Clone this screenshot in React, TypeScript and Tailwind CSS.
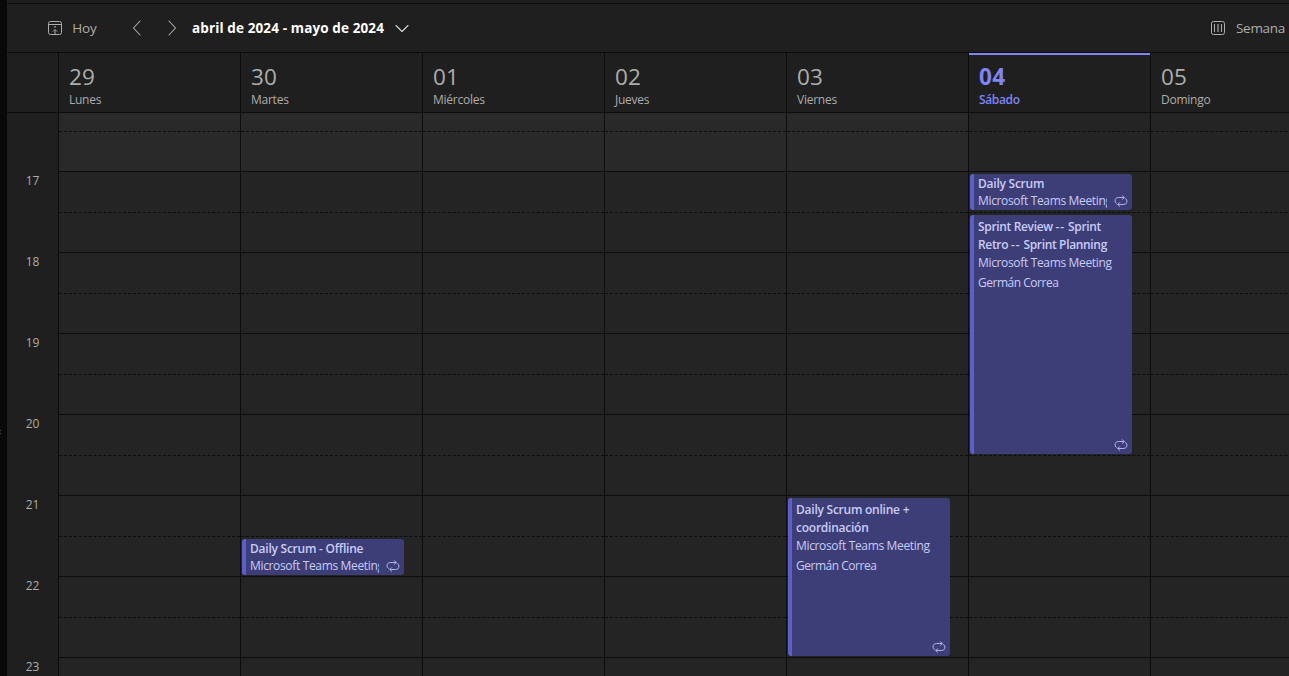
import React from "react";

type CalendarEvent = {
  title: string[];
  organizer?: string;
  place: string;
  className: string;
  compact?: boolean;
};

type Day = { number: string; name: string; today?: boolean; weekend?: boolean; events: CalendarEvent[] };

const TEAMS = "Microsoft Teams Meeting";

const days: Day[] = [
  { number: "29", name: "Lunes", events: [] },
  {
    number: "30",
    name: "Martes",
    events: [{ title: ["Daily Scrum - Offline"], place: TEAMS, compact: true, className: "top-[426px] h-9" }],
  },
  { number: "01", name: "Miércoles", events: [] },
  { number: "02", name: "Jueves", events: [] },
  {
    number: "03",
    name: "Viernes",
    events: [
      {
        title: ["Daily Scrum online +", "coordinación"],
        place: TEAMS,
        organizer: "Germán Correa",
        className: "top-[385px] h-[158px]",
      },
    ],
  },
  {
    number: "04",
    name: "Sábado",
    today: true,
    weekend: true,
    events: [
      { title: ["Daily Scrum"], place: TEAMS, compact: true, className: "top-[61px] h-9" },
      {
        title: ["Sprint Review -- Sprint", "Retro -- Sprint Planning"],
        place: TEAMS,
        organizer: "Germán Correa",
        className: "top-[102px] h-[239px]",
      },
    ],
  },
  { number: "05", name: "Domingo", weekend: true, events: [] },
];

const hours = ["17", "18", "19", "20", "21", "22", "23"];

function TodayIcon() {
  return (
    <svg className="size-4 shrink-0" viewBox="0 0 16 16" fill="none" stroke="currentColor">
      <rect x="1.5" y="1.5" width="13" height="13" rx="2" />
      <path d="M1.5 4.5h13M8 15V10M6 11.5l2-2 2 2" />
      <path d="M8 6v1.5" strokeWidth="1.4" />
    </svg>
  );
}

function WeekIcon() {
  return (
    <svg className="size-4 shrink-0" viewBox="0 0 16 16" fill="none" stroke="currentColor">
      <rect x="1.5" y="1.5" width="13" height="13" rx="2" />
      <path d="M4.5 4v8M11.5 4v8" />
      <path d="M8 4v8" strokeWidth="2" opacity="0.55" />
    </svg>
  );
}

function Chevron({ d, className }: { d: string; className: string }) {
  return (
    <svg className={className} viewBox="0 0 16 16" fill="none" stroke="currentColor" strokeWidth="1.1" strokeLinecap="round" strokeLinejoin="round">
      <path d={d} />
    </svg>
  );
}

function RepeatIcon({ className }: { className: string }) {
  return (
    <svg className={className} viewBox="0 0 14 12" fill="none" stroke="currentColor" strokeWidth="1" strokeLinecap="round" strokeLinejoin="round">
      <path d="M2.6 8.6A3.3 3.3 0 0 1 4.8 2.5H10M8.4 .7l1.8 1.8-1.8 1.8" />
      <path d="M11.4 3.4A3.3 3.3 0 0 1 9.2 9.5H4M5.6 7.7 3.8 9.5l1.8 1.8" />
    </svg>
  );
}

function EventTitle({ line }: { line: string }) {
  const [before, after] = line.split("--");
  return (
    <h3 className="whitespace-nowrap font-semibold tracking-[-0.24px]">
      {after === undefined ? (
        line
      ) : (
        <span className="tracking-[-0.34px]">
          {before}
          <span className="tracking-[1px]">--</span>
          {after}
        </span>
      )}
    </h3>
  );
}

function EventCard({ event }: { event: CalendarEvent }) {
  return (
    <article
      className={`absolute left-px w-[162px] overflow-hidden rounded-[3px] border-l-4 border-[#5b5fc7] bg-[#3d3e78] pl-1 text-xs text-[#c9ccf8] ${event.className}`}
    >
      <div className={event.compact ? "pt-px leading-[17px]" : "pt-[3px] leading-[18px]"}>
        {event.title.map((line) => (
          <EventTitle key={line} line={line} />
        ))}
        <p className={`overflow-hidden whitespace-nowrap tracking-[-0.34px] ${event.compact ? "w-[129px]" : ""}`}>{event.place}</p>
        {event.organizer && <p className="mt-0.5 tracking-[-0.48px]">{event.organizer}</p>}
      </div>
      <RepeatIcon className="absolute right-1 bottom-[3px] h-3 w-3.5 text-[#aeb2ec]" />
    </article>
  );
}

function HourLines({ weekend }: { weekend?: boolean }) {
  return (
    <div>
      <div className={weekend ? "bg-[#242424]" : "bg-[#292929]"}>
        <div className="h-[19px] border-b border-dashed border-[#0d0d0d]" />
        <div className="h-10 border-b border-[#0d0d0d]" />
      </div>
      {hours.map((hour) => (
        <div key={hour}>
          <div className="h-[41px] border-b border-dashed border-[#0d0d0d]" />
          <div className="h-10 border-b border-[#0d0d0d]" />
        </div>
      ))}
    </div>
  );
}

export default function App() {
  return (
    <div className="flex h-[676px] w-[1289px] overflow-hidden bg-[#1f1f1f] font-['Open_Sans','Noto_Sans',sans-serif] text-[#adadad]">
      <div className="flex w-[7px] shrink-0 flex-col bg-[#080808] pt-[430px]">
        <div className="h-1 w-px border-y border-[#4a4a4a]" />
      </div>
      <main className="flex min-w-0 flex-1 flex-col">
        <div className="h-1 shrink-0 border-b border-[#0d0d0d]" />
        <header className="flex h-[49px] shrink-0 items-center border-b border-[#0d0d0d] pl-10 text-sm">
          <button className="flex items-center gap-2">
            <TodayIcon />
            <span className="w-[27px] pt-0.5 text-[13.5px] tracking-[-0.1px]">Hoy</span>
          </button>
          <Chevron className="ml-[31px] size-4" d="M11 1 4.5 8l6.5 7" />
          <Chevron className="ml-[19px] size-4" d="M5 1l6.5 7L5 15" />
          <button className="ml-[12px] flex items-center gap-2.5 text-white">
            <span className="w-[192px] pt-0.5 text-left whitespace-nowrap text-[13.5px] font-bold tracking-[0.12px]">
              abril de 2024 - mayo de 2024
            </span>
            <Chevron className="size-4 text-[#d6d6d6]" d="M2 5.5l6 6 6-6" />
          </button>
          <button className="ml-auto flex items-center gap-2.5 pr-1">
            <WeekIcon />
            <span className="w-[49px] pt-0.5 text-[13.5px] tracking-[-0.3px]">Semana</span>
          </button>
        </header>
        <div className="flex h-[60px] shrink-0 border-b border-[#0d0d0d]">
          <div className="w-[51px] shrink-0" />
          {days.map((day) => (
            <div key={day.number} className="w-[182px] shrink-0 border-l border-[#0d0d0d]">
              <div className={`h-full border-t-2 pt-2 pl-2.5 ${day.today ? "border-[#7f85f5] text-[#7f85f5]" : "border-transparent"}`}>
                <div className={`mb-px text-[22.5px] leading-7 ${day.today ? "font-bold tracking-[0.3px]" : "tracking-[0.1px]"}`}>{day.number}</div>
                <div className={`text-xs leading-4 ${day.today ? "font-semibold tracking-[-0.35px]" : "tracking-[-0.25px]"}`}>{day.name}</div>
              </div>
            </div>
          ))}
        </div>
        <div className="flex min-h-0 flex-1 overflow-hidden">
          <div className="w-[51px] shrink-0 pt-[59px] text-center text-xs">
            {hours.map((hour) => (
              <div key={hour} className="h-[81px] leading-[18px] tracking-[-0.2px]">
                {hour}
              </div>
            ))}
          </div>
          {days.map((day) => (
            <section key={day.number} className="relative w-[182px] shrink-0 border-l border-[#0d0d0d] bg-[#242424]">
              <HourLines weekend={day.weekend} />
              {day.events.map((event) => (
                <EventCard key={event.title[0]} event={event} />
              ))}
            </section>
          ))}
        </div>
      </main>
    </div>
  );
}
